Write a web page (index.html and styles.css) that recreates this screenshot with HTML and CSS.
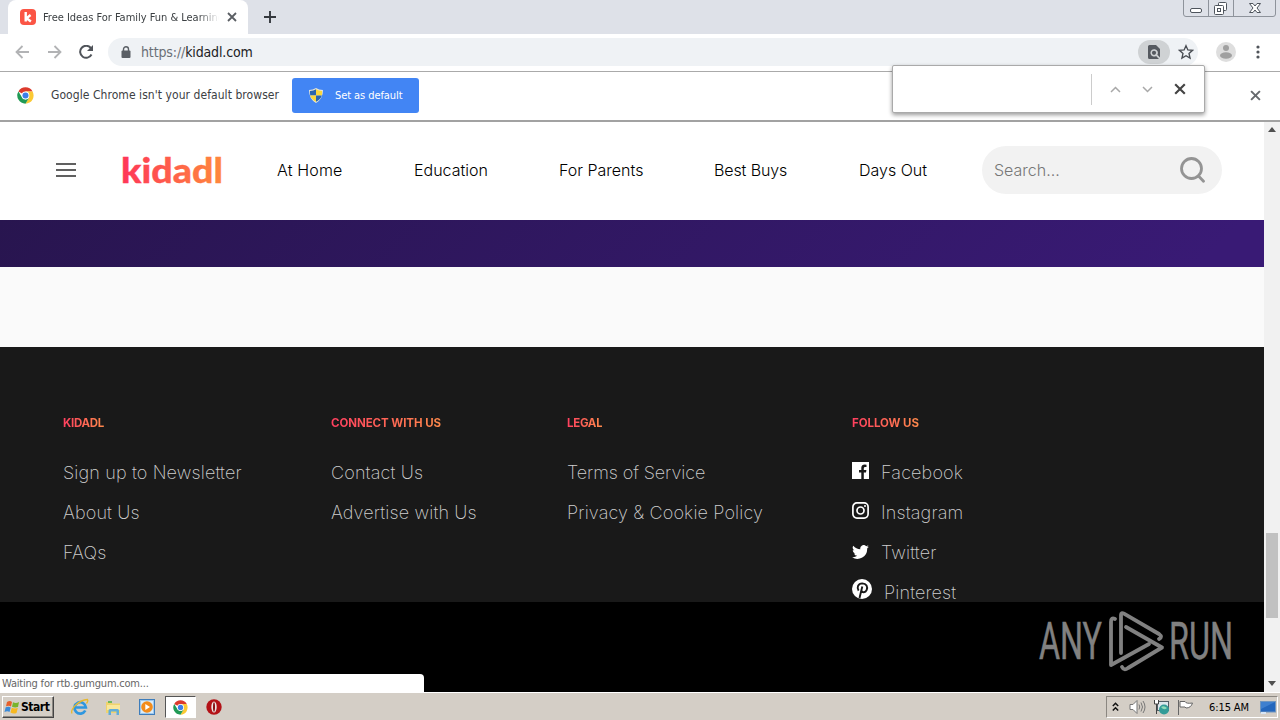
FILE: index.html
```html
<!DOCTYPE html>
<html lang="en">
<head>
<meta charset="utf-8">
<title>Free Ideas For Family Fun &amp; Learning</title>
<link rel="stylesheet" href="styles.css">
</head>
<body>
<svg width="0" height="0" class="defs">
  <defs>
    <linearGradient id="brand" x1="0" x2="1" y1="0" y2="0"><stop offset="0" stop-color="#ff3658"/><stop offset="1" stop-color="#ff8a3c"/></linearGradient>
    <symbol id="chrome" viewBox="0 0 48 48">
      <circle cx="24" cy="24" r="23" fill="#fff"/>
      <path d="M24 24 4 12.5A23 23 0 0 1 44 12.5H24z" fill="#dc3a2c"/>
      <path d="M24 13H44A23 23 0 0 1 24 47L34 29.500z" fill="#fbc934"/>
      <path d="M4 12.500 14.500 29.500 24 35 34 30 24 47A23 23 0 0 1 4 12.500z" fill="#219a55"/>
      <circle cx="24" cy="24" r="11" fill="#fff"/><circle cx="24" cy="24" r="8.500" fill="#3d7fe8"/>
    </symbol>
    <symbol id="cross" viewBox="0 0 10 10"><path d="M1 1 9 9M9 1 1 9" stroke="currentColor" stroke-width="1.800" fill="none"/></symbol>
  </defs>
</svg>
<div class="screen">
  <div class="tabstrip">
    <div class="tab">
      <svg class="favicon" width="16" height="16" viewBox="0 0 16 16"><rect width="16" height="16" rx="4" fill="#fb5545"/><path d="M5.700 3v9.500M10.600 6 6.500 9.200l4.400 3.300" stroke="#fff" stroke-width="2.400" fill="none"/></svg>
      <span class="tab-title">Free Ideas For Family Fun &amp; Learning</span>
      <svg class="tab-close" width="10" height="10"><use href="#cross"/></svg>
    </div>
    <svg class="new-tab" width="12" height="12" viewBox="0 0 12 12"><path d="M6 0v12M0 6h12" stroke="#34383e" stroke-width="1.900"/></svg>
    <svg class="window-buttons" width="94" height="17" viewBox="0 0 94 17" fill="none">
      <path d="M.5 0V14Q.5 16.500 3 16.500H90Q92.500 16.500 92.500 14V0M25.500 0V16.500M50.500 0V16.500" stroke="#8e939b"/>
      <g stroke="#4e545c"><rect x="7.500" y="8.500" width="11" height="4" rx="1.500" fill="#fff"/><rect x="35.500" y="2.500" width="8" height="8" rx="1" fill="#fff"/><rect x="31.500" y="5.500" width="9" height="9" rx="1" fill="#fff"/><rect x="34.500" y="8.500" width="3" height="3"/><path d="M66.500 3.500h3.500l2 2.500 2-2.500h3.500l-3.500 4.500 3.500 4.500h-3.500l-2-2.500-2 2.500h-3.500l3.500-4.500z" fill="#fff"/></g>
    </svg>
  </div>

  <div class="toolbar">
    <svg class="arrow" width="15" height="14" viewBox="0 0 15 14"><path d="M14 7H1.500M7.500 1 1.500 7l6 6" /></svg>
    <svg class="arrow" width="15" height="14" viewBox="0 0 15 14"><path d="M1 7h12.500M7.500 1l6 6-6 6" /></svg>
    <svg class="reload" width="15" height="14" viewBox="0 0 15 14"><path d="M12.500 9.500A6 6 0 1 1 11.800 3" fill="none" stroke="#50545a" stroke-width="2"/><path d="M14 0v6H8z" fill="#50545a"/></svg>
    <div class="omnibox">
      <svg class="lock" width="10" height="13" viewBox="0 0 10 13"><rect x=".5" y="4.500" width="9" height="7.500" rx="1" fill="#5a5f65"/><path d="M2.500 5V3.300a2.500 2.500 0 0 1 5 0V5" stroke="#5a5f65" stroke-width="1.400" fill="none"/></svg>
      <span class="url"><span class="scheme">https://</span>kidadl.com</span>
      <span class="find-chip"><svg width="12" height="14" viewBox="0 0 12 14"><path d="M1.500 0H8l4 4v8.500L9.300 9.800a3.700 3.700 0 1 0-1.200 1.200L11 14H1.500Q0 14 0 12.500v-11Q0 0 1.500 0z" fill="#55595f"/><circle cx="6" cy="7.800" r="2.100" fill="#55595f"/></svg></span>
      <svg class="star" width="16" height="16" viewBox="0 0 24 24"><path d="M12 2.500l2.800 6.400 7 .6-5.300 4.700 1.600 6.900-6.100-3.600-6.100 3.600 1.600-6.900L2.200 9.500l7-.6z" fill="none" stroke="#484c52" stroke-width="2"/></svg>
    </div>
    <svg class="avatar" width="20" height="20" viewBox="0 0 20 20"><circle cx="10" cy="10" r="10" fill="#dedede"/><circle cx="10" cy="6" r="3" fill="#a0a0a0"/><ellipse cx="10" cy="13.500" rx="6" ry="3.200" fill="#a0a0a0"/></svg>
    <svg class="dots" width="4" height="14" viewBox="0 0 4 14" fill="#50545a"><circle cx="2" cy="2" r="1.600"/><circle cx="2" cy="7" r="1.600"/><circle cx="2" cy="12" r="1.600"/></svg>
  </div>

  <div class="infobar">
    <svg class="chrome-logo" width="17" height="17"><use href="#chrome"/></svg>
    <span class="info-text">Google Chrome isn't your default browser</span>
    <div class="default-button">
      <svg width="14" height="15" viewBox="0 0 14 15"><path d="M7 0Q10 2 14 2 14 11 7 15 0 11 0 2 4 2 7 0z" fill="#e6e6d8"/><path d="M7 1.300V7.500H1.200Q.9 5.500 1 3 4.500 2.800 7 1.300z" fill="#2a66ae"/><path d="M7 1.300Q9.500 2.800 13 3q.1 2.500-.2 4.500H7z" fill="#f9d83c"/><path d="M1.200 7.500H7v6.300Q2.300 11.500 1.200 7.500z" fill="#f9d83c"/><path d="M12.800 7.500H7v6.300q4.700-2.300 5.800-6.300z" fill="#2a66ae"/></svg>
      <span>Set as default</span>
    </div>
    <svg class="info-close" width="11" height="11"><use href="#cross"/></svg>
  </div>

  <div class="viewport">
    <div class="page">
      <header class="site-header">
        <div class="burger"><i></i><i></i><i></i></div>
        <svg class="logo" width="108" height="50" viewBox="0 0 108 50"><text x="0" y="38" textLength="102" lengthAdjust="spacingAndGlyphs" fill="url(#brand)" stroke="url(#brand)">kidadl</text></svg>
        <nav class="nav"><a class="n1">At Home</a><a class="n2">Education</a><a class="n3">For Parents</a><a class="n4">Best Buys</a><a class="n5">Days Out</a></nav>
        <div class="search"><span>Search...</span>
          <svg width="25" height="26" viewBox="0 0 25 26"><circle cx="11.500" cy="11.500" r="10" fill="none" stroke="#949494" stroke-width="2.800"/><path d="M18.500 19 23.500 24.300" stroke="#949494" stroke-width="2.800" stroke-linecap="round"/></svg>
        </div>
      </header>
      <div class="banner"></div>
      <div class="spacer"></div>
      <footer class="footer">
        <section><h4 class="h-kid">KIDADL</h4><a>Sign up to Newsletter</a><a>About Us</a><a>FAQs</a></section>
        <section><h4>CONNECT WITH US</h4><a>Contact Us</a><a>Advertise with Us</a></section>
        <section class="legal"><h4>LEGAL</h4><a class="terms">Terms of Service</a><a>Privacy &amp; Cookie Policy</a></section>
        <section class="social"><h4>FOLLOW US</h4>
          <a><svg width="17" height="17" viewBox="0 0 17 17"><path d="M0 0h17v17h-5.200v-6.500H14l.4-2.600h-2.600V6.300q0-1.300 1.400-1.300h1.300V2.700q-4.900-.9-5.200 3v2.200H7v2.600h2.300V17H0z" fill="#fff"/></svg>Facebook</a>
          <a><svg width="17" height="17" viewBox="0 0 17 17" fill="none" stroke="#fff"><rect x=".9" y=".9" width="15.200" height="15.200" rx="4" stroke-width="1.700"/><circle cx="8.500" cy="8.500" r="3.500" stroke-width="1.700"/><circle cx="13" cy="4" r="1" fill="#fff" stroke="none"/></svg>Instagram</a>
          <a class="tw"><svg width="17" height="14" viewBox="0 0 24 20"><path d="M24 2.400a10 10 0 0 1-2.800.8A5 5 0 0 0 23.300.5a10 10 0 0 1-3.100 1.200 4.900 4.900 0 0 0-8.400 4.500A14 14 0 0 1 1.700 1a4.900 4.900 0 0 0 1.500 6.600A5 5 0 0 1 1 7v.1A4.900 4.900 0 0 0 4.900 12a5 5 0 0 1-2.200.1 4.900 4.900 0 0 0 4.600 3.400A10 10 0 0 1 0 17.500 14 14 0 0 0 21.500 5z" fill="#fff"/></svg>Twitter</a>
          <a class="pin"><svg width="20" height="20" viewBox="0 0 20 20"><circle cx="10" cy="10" r="10" fill="#fff"/><path d="M6.600 11.600C4.500 8.500 6 4.500 10.300 4.400c4.200 0 5.700 3.600 4.300 6.700-1.200 2.700-4.500 2.700-5.100.7M10.300 7.500 7.500 19" fill="none" stroke="#191919" stroke-width="1.900"/></svg>Pinterest</a>
        </section>
      </footer>
      <div class="bottom"></div>
      <svg class="watermark" width="208" height="76" viewBox="0 0 208 76" fill="none">
        <text x="1" y="49" textLength="63" lengthAdjust="spacingAndGlyphs">ANY</text>
        <text x="131" y="49" textLength="64" lengthAdjust="spacingAndGlyphs">RUN</text>
        <g stroke="#818181" stroke-width="3.800" stroke-linejoin="round" stroke-linecap="round"><path d="M77 9q-4-2-4 3V55L111 34"/><path d="M83 43V5q0-3 3-1.300L121 24q4 3 0 5"/><path d="M88 17 124 37.500 90 58q-4 3-6-1"/></g>
      </svg>
      <div class="status">Waiting for rtb.gumgum.com...</div>
    </div>
    <div class="scrollbar"><i class="up"></i><b></b><i class="down"></i></div>
  </div>

  <div class="findbar"><i></i>
    <svg width="11" height="7" viewBox="0 0 11 7"><path d="M1 6l4.500-4.500L10 6"/></svg>
    <svg width="11" height="7" viewBox="0 0 11 7"><path d="M1 1l4.500 4.500L10 1"/></svg>
    <svg class="fx" width="12" height="12"><use href="#cross"/></svg>
  </div>

  <div class="taskbar">
    <div class="start"><svg width="16" height="16" viewBox="0 0 16 16"><path d="M3 3q3-2 5 0L7 7.500q-2-1.500-5-.2z" fill="#e6602c"/><path d="M9 3.300q3 1.500 6-.3L14 8q-3 1-6-.2z" fill="#78b42c"/><path d="M1.700 8.300q3-1.300 5 .2L5.500 13q-2-1.500-5 0z" fill="#3a8ad8"/><path d="M7.800 8.800q3 1.200 6 .2l-1.300 5q-3 1.300-6-.5z" fill="#f7b820"/></svg><span>Start</span></div>
    <svg class="task ie" width="18" height="18" viewBox="0 0 18 18" fill="none"><path d="M14.300 12.500A5.700 5.700 0 1 1 14.900 9.500H4" stroke="#2f97df" stroke-width="2.700"/><path d="M1 15.500C-1 11 8 2 16.500 1.500q1 1.500-1 4" stroke="#e8b92d" stroke-width="1.300"/></svg>
    <svg class="task folder" width="17" height="17" viewBox="0 0 17 17"><path d="M1 3h5l1.500 1.500H15V14H1z" fill="#efd36d"/><path d="M3 2h4v2H3z" fill="#70b85a"/><path d="M2 6h13v5H2z" fill="#f8e79b"/><path d="M3.500 16v-4.500Q3.500 10 5 10h7.500q1.500 0 1.500 1.500V16h-2.500v-3.500H6V16z" fill="#61add8"/></svg>
    <svg class="task media" width="16" height="16" viewBox="0 0 16 16"><rect x=".5" y=".5" width="15" height="15" fill="#9dc9ef" stroke="#3e7dbb"/><rect x="2" y="2" width="12" height="12" fill="#d9ecfa"/><circle cx="8" cy="8" r="5.800" fill="#f28c1c"/><path d="M6.300 5v6l4.700-3z" fill="#fff"/></svg>
    <div class="active-task"><svg width="15" height="15"><use href="#chrome"/></svg></div>
    <svg class="task opera" width="16" height="16" viewBox="0 0 16 16"><circle cx="8" cy="8" r="7.700" fill="#b31217"/><ellipse cx="8" cy="8" rx="2.700" ry="5.500" fill="#ece7e5"/><ellipse cx="8" cy="8" rx="1" ry="4.800" fill="#8a1014"/></svg>
    <div class="tray">
      <svg class="chev" width="7" height="10" viewBox="0 0 7 10"><path d="M.8 4 3.500 1.300 6.200 4M.8 8.500l2.700-2.700 2.700 2.700" fill="none" stroke="#111" stroke-width="1.500"/></svg>
      <svg class="speaker" width="17" height="16" viewBox="0 0 17 16" fill="none" stroke="#777"><path d="M1 5.500h3L8 1.500v13L4 10.500H1z" fill="#fff"/><path d="M10 5.500q1.500 2.500 0 5M12 3.500q3 4.500 0 9M14 2q4 6 0 12"/></svg>
      <svg class="network" width="17" height="16" viewBox="0 0 17 16"><rect x="4.500" y="2.500" width="11" height="9" fill="#dce7ec" stroke="#525e66"/><path d="M1.500 1v4h4V1M3.500 5v10" stroke="#444" fill="#fff"/><circle cx="11" cy="10.500" r="5" fill="#339c98"/><path d="M8 8q3-2 6 1-3 3-6-1z" fill="#8fdbb7"/></svg>
      <svg class="flag" width="17" height="16" viewBox="0 0 17 16"><path d="M1.500 1v15M3 2.500h5q1 2.500 7.500 1.500-1.500 5-6.500 5l-1-1H3z" fill="#fff" stroke="#666"/></svg>
      <span>6:15 AM</span>
      <svg class="desk" width="16" height="13" viewBox="0 0 16 13"><rect x=".5" y=".5" width="15" height="10.500" fill="#2467bd" stroke="#7096bf"/><path d="M1 1h14L1 8z" fill="#3f80cf"/><path d="M1 12h5" stroke="#d8e5f4" stroke-width="2"/></svg>
    </div>
  </div>
</div>
</body>
</html>
```
FILE: styles.css
```css
* { box-sizing: border-box; }
body { margin: 0; }
svg { display: block; flex: none; }
.defs { position: absolute; }
.screen { position: relative; width: 1280px; height: 720px; overflow: hidden; display: flex; flex-direction: column; background: #fff; font-family: "DejaVu Sans Condensed", "DejaVu Sans", sans-serif; font-stretch: condensed; white-space: nowrap; }
.tabstrip { height: 34px; flex: none; background: #dee1e8; display: flex; padding-left: 8px; }
.tab { width: 240px; height: 34px; background: #fff; border-radius: 8px 8px 0 0; display: flex; align-items: center; padding-left: 12px; }
.tab-title { width: 176px; margin-left: 7px; overflow: hidden; font-size: 11px; letter-spacing: -.02px; color: #3c4043; -webkit-mask-image: linear-gradient(90deg, #000 88%, transparent); mask-image: linear-gradient(90deg, #000 88%, transparent); }
.tab-close { margin-left: 8px; color: #5a5e63; }
.new-tab { margin: 11px 0 0 16px; }
.window-buttons { margin: 0 3px 0 auto; }
.toolbar { height: 37px; flex: none; display: flex; align-items: center; padding: 0 20px 1px 15px; }
.arrow { margin-right: 17px; fill: none; stroke: #b2b3b5; stroke-width: 1.8; }
.omnibox { flex: 1; height: 28px; margin: 0 18px 0 14px; background: #eff2f5; border-radius: 14px; display: flex; align-items: center; padding: 0 4px 0 13px; }
.url { margin-left: 10px; font-size: 14px; letter-spacing: -.13px; color: #202124; flex: 1; }
.scheme { color: #6a6f75; }
.find-chip { width: 32px; height: 24px; border-radius: 12px; background: #cfd2d4; display: flex; align-items: center; justify-content: center; margin-right: 8px; }
.dots { margin-left: 20px; }
.infobar { height: 51px; flex: none; border-top: 1px solid #aaa; border-bottom: 2px solid #a2a2a2; display: flex; align-items: center; padding: 0 19px 2px 17px; }
.info-text { margin-left: 17px; width: 229px; font-size: 12px; color: #3c4043; letter-spacing: .06px; }
.default-button { width: 127px; height: 35px; margin-left: 12px; border-radius: 3px; background: #4285f4; color: #fff; font-size: 11px; display: flex; align-items: center; padding-left: 17px; letter-spacing: -.08px; }
.default-button span { margin-left: 12px; }
.info-close { margin-left: auto; color: #66696d; }
.viewport { height: 570px; flex: none; display: flex; }
.page { width: 1264px; position: relative; font-family: Inter, sans-serif; font-stretch: normal; }
.site-header { height: 98px; display: flex; align-items: center; padding: 0 0 2px 56px; }
.burger { width: 20px; display: flex; flex-direction: column; gap: 4px; }
.burger i { height: 2px; background: #606060; }
.logo { margin-left: 45px; }
.logo text { font: 900 34px Lato, sans-serif; stroke-width: .3px; }
.nav { display: flex; margin-left: 48px; font-size: 16px; font-weight: 300; color: #000; }
.nav a { flex: none; }
.n1 { width: 137px; letter-spacing: .15px; }
.n2 { width: 145px; }
.n3 { width: 155px; }
.n4 { width: 145px; letter-spacing: -.1px; }
.n5 { width: 123px; }
.search { width: 240px; height: 48px; border-radius: 24px; background: #f2f2f2; color: #777; font-size: 16px; font-weight: 300; display: flex; align-items: center; justify-content: space-between; padding: 0 17px 0 12px; }
.banner { height: 47px; background: linear-gradient(135deg, #28154f, #391a75 95%); }
.spacer { height: 80px; background: #fafafa; }
.footer { height: 255px; background: #191919; padding: 69px 0 0 63px; display: grid; grid-template-columns: 268px 236px 285px 300px; }
.footer section { display: flex; flex-direction: column; align-items: flex-start; }
.footer h4 { margin: 0 0 30px; font-size: 11.5px; line-height: 14px; font-weight: 700; letter-spacing: -.06px; color: transparent; background: linear-gradient(90deg, #ff3f5f, #ff8a4c); -webkit-background-clip: text; background-clip: text; }
.footer .h-kid, .footer .legal h4 { letter-spacing: -.3px; }
.footer a { height: 40px; line-height: 26px; font-size: 18px; font-weight: 200; letter-spacing: .14px; color: #cfcfcf; display: flex; }
.footer .terms { letter-spacing: -.1px; }
.footer .social section, .footer .pin { height: 26px; }
.social a svg { margin: 2px 12px 0 0; }
.social .tw svg { margin-top: 5px; }
.social .pin svg { margin-top: -1px; }
.bottom { height: 90px; background: #000; }
.watermark { position: absolute; left: 1038px; top: 488px; }
.watermark text { font: 400 51px Roboto, sans-serif; fill: #818181; stroke: #818181; stroke-width: .5px; }
.status { position: absolute; left: 0; bottom: 0; width: 424px; height: 18px; background: #fff; border-top-right-radius: 4px; font: 11px/19px "DejaVu Sans Condensed", sans-serif; letter-spacing: -.2px; color: #666; padding-left: 2px; }
.scrollbar { width: 16px; background: #f1f1f1; position: relative; display: flex; flex-direction: column; align-items: center; }
.scrollbar b { width: 12px; height: 85px; background: #c1c1c1; margin-top: 401px; }
.up, .down { border: 4px solid transparent; width: 8px; }
.up { border-top: 0; border-bottom: 5px solid #505050; margin-top: 5px; }
.down { border-bottom: 0; border-top: 5px solid #505050; margin-top: auto; margin-bottom: 6px; }
.findbar { position: absolute; left: 892px; top: 65px; width: 313px; height: 48px; background: #fff; border: 1px solid #aaa; border-radius: 2px; box-shadow: 0 2px 4px rgba(0,0,0,.4); display: flex; align-items: center; padding-left: 198px; }
.findbar i { width: 1px; height: 31px; background: #ccc; margin-right: 18px; }
.findbar svg { fill: none; stroke: #a8a8a8; stroke-width: 1.5; margin-right: 21px; }
.findbar .fx { color: #444; stroke: none; margin: 0; }
.taskbar { height: 28px; flex: none; background: #d4cec6; border-top: 1px solid #fff; box-shadow: 0 -1px #d4d0c8; display: flex; align-items: center; padding: 1px 2px 0; }
.start { width: 52px; height: 22px; border: 1px solid; border-color: #fff #444 #444 #fff; box-shadow: inset -1px -1px #8c8882; display: flex; align-items: center; font-size: 12px; font-weight: 700; letter-spacing: -.45px; padding-left: 1px; }
.start span { margin-left: 1px; }
.ie { margin-left: 17px; }
.folder { margin-left: 16px; }
.media { margin-left: 17px; }
.active-task { width: 31px; height: 22px; margin-left: 10px; background: #fff; border: 1px solid; border-color: #555 #fff #fff #555; display: flex; align-items: center; justify-content: center; }
.opera { margin-left: 10px; }
.tray { width: 172px; height: 22px; margin-left: auto; border: 1px solid; border-color: #8b8781 #fff #fff #8b8781; display: flex; align-items: center; font-size: 11px; padding-left: 5px; letter-spacing: -.1px; }
.speaker { margin-left: 10px; }
.network { margin-left: 7px; }
.flag { margin-left: 7px; }
.tray span { width: 41px; margin-left: 15px; }
.desk { margin-left: 10px; }
```
